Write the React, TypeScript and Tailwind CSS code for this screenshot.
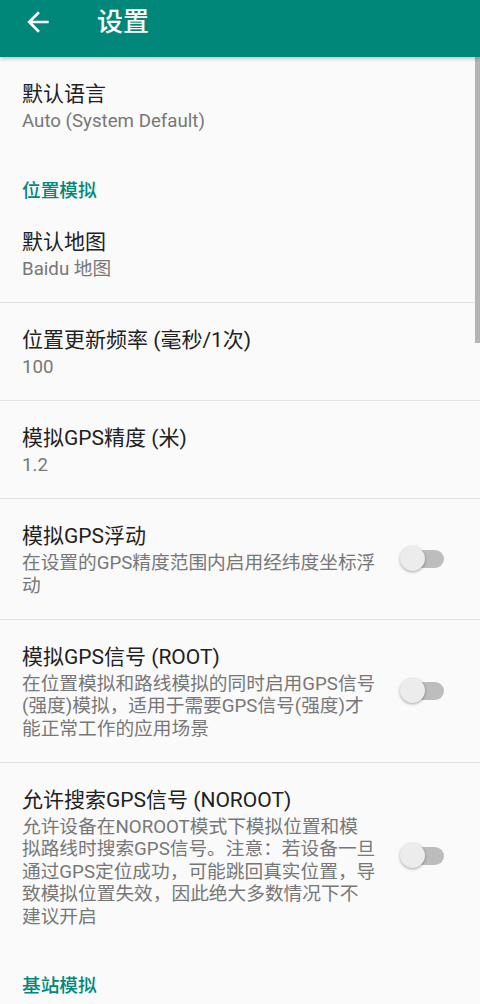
import React from "react";

const FONT = { fontFamily: 'Roboto, "Noto Sans CJK SC", sans-serif' };

function Switch() {
  return (
    <div className="relative w-[44px] h-[26px] shrink-0">
      <div className="absolute left-[4px] top-[4px] w-[40px] h-[18px] rounded-full bg-[#bdbdbd]" />
      <div className="absolute left-0 top-0 w-[25px] h-[25px] rounded-full bg-[#ececec] shadow-[0_1px_3px_rgba(0,0,0,0.35)]" />
    </div>
  );
}

function Row({
  title,
  lines,
  toggle,
  divider = true,
  pb = "pb-[21.5px]",
}: {
  title: string;
  lines: string[];
  toggle?: boolean;
  divider?: boolean;
  pb?: string;
}) {
  return (
    <div className={divider ? "border-b border-[#e3e3e3]" : ""}>
      <div className="flex items-center pl-[22px] pr-[36px]">
        <div className={"flex-1 pt-[24px] " + pb}>
          <div className="text-[21px] leading-[26px] text-[#212121]">{title}</div>
          <div className="mt-[3px] text-[18.7px] leading-[22.5px] text-[#777777] whitespace-nowrap">
            {lines.map((l, i) => (
              <div key={i}>{l}</div>
            ))}
          </div>
        </div>
        {toggle && <Switch />}
      </div>
    </div>
  );
}

function Category({ label }: { label: string }) {
  return (
    <div className="h-[50px] pt-[25px] pl-[22px] text-[18.7px] leading-[22px] font-medium text-[#00897b]">
      {label}
    </div>
  );
}

export default function App() {
  return (
    <div className="relative w-full h-[1004px] overflow-hidden bg-[#fafafa]" style={FONT}>
      <header className="relative z-10 h-[57px] bg-[#00877a] flex items-center pb-[13px] shadow-[0_2px_4px_rgba(0,0,0,0.22)]">
        <svg
          className="ml-[22px] w-[32px] h-[32px]"
          viewBox="0 0 24 24"
          fill="#ffffff"
        >
          <path d="M20 11H7.83l5.59-5.59L12 4l-8 8 8 8 1.41-1.41L7.83 13H20v-2z" />
        </svg>
        <div className="ml-[43px] text-[26px] leading-[30px] font-medium text-white">设置</div>
      </header>

      <main>
        <Row title="默认语言" lines={["Auto (System Default)"]} divider={false} pb="pb-[22.5px]" />
        <Category label="位置模拟" />
        <Row title="默认地图" lines={["Baidu 地图"]} />
        <Row title="位置更新频率 (毫秒/1次)" lines={["100"]} />
        <Row title="模拟GPS精度 (米)" lines={["1.2"]} />
        <Row
          title="模拟GPS浮动"
          lines={["在设置的GPS精度范围内启用经纬度坐标浮", "动"]}
          toggle
        />
        <Row
          title="模拟GPS信号 (ROOT)"
          lines={[
            "在位置模拟和路线模拟的同时启用GPS信号",
            "(强度)模拟，适用于需要GPS信号(强度)才",
            "能正常工作的应用场景",
          ]}
          toggle
        />
        <Row
          title="允许搜索GPS信号 (NOROOT)"
          lines={[
            "允许设备在NOROOT模式下模拟位置和模",
            "拟路线时搜索GPS信号。注意：若设备一旦",
            "通过GPS定位成功，可能跳回真实位置，导",
            "致模拟位置失效，因此绝大多数情况下不",
            "建议开启",
          ]}
          toggle
          divider={false}
        />
        <Category label="基站模拟" />
      </main>

      <div className="absolute right-0 top-[57px] w-[5px] h-[286px] bg-[#b4b4b4]" />
    </div>
  );
}
